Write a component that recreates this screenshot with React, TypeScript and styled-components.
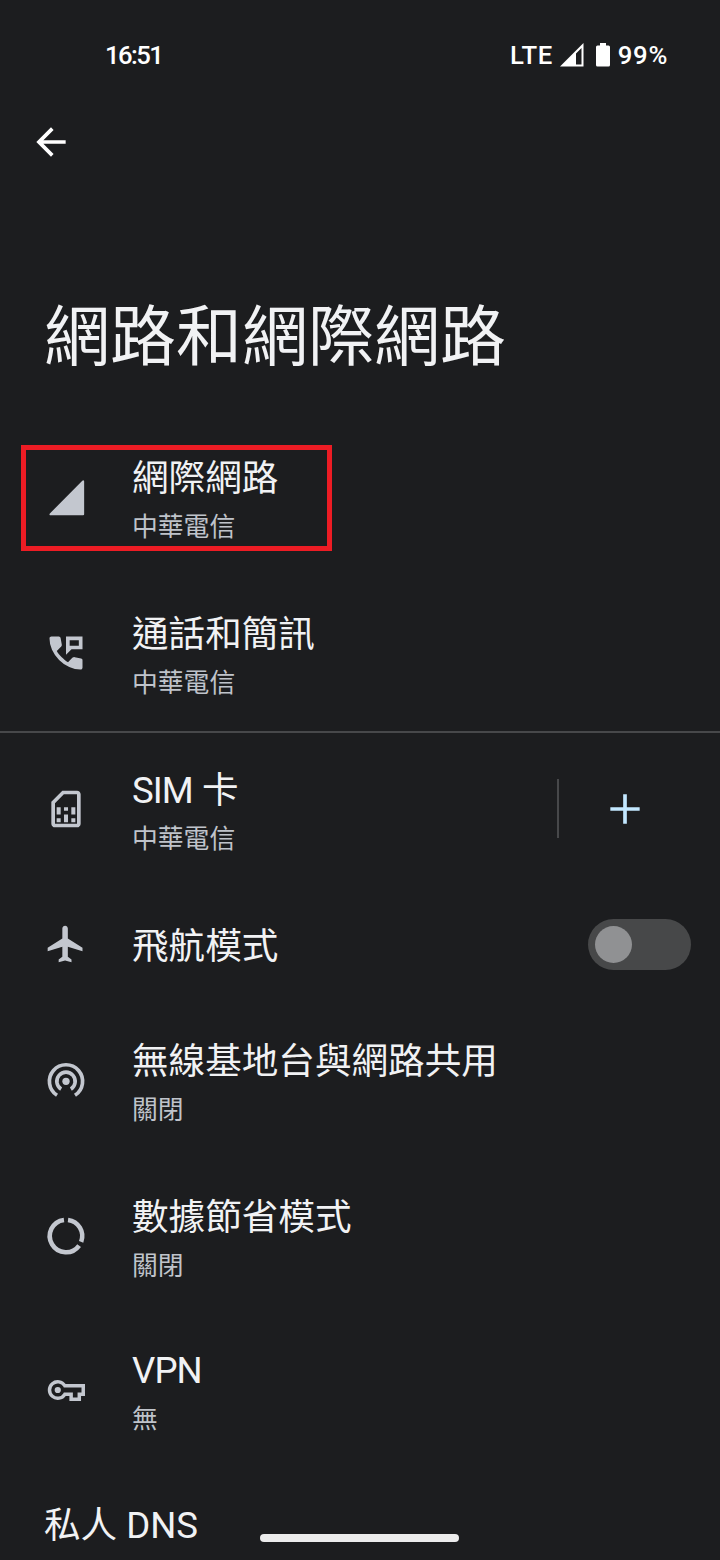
import React from "react";
import styled, { createGlobalStyle } from "styled-components";

const GlobalStyle = createGlobalStyle`
  * { box-sizing: border-box; }
  body {
    margin: 0;
    background: #1c1d1f;
    font-family: Roboto, "Noto Sans CJK TC", sans-serif;
    color: #f1f2f4;
  }
`;

const Screen = styled.div`
  position: relative;
  display: flex;
  flex-direction: column;
  width: 720px;
  height: 1560px;
  overflow: hidden;
  background: #1c1d1f;
`;

const StatusBar = styled.header`
  display: flex;
  flex-shrink: 0;
  align-items: center;
  justify-content: space-between;
  height: 110px;
  padding: 0 52px 0 105px;
  font-size: 25.7px;
  font-weight: 500;
  line-height: 30px;
  color: #fff;
`;

const Clock = styled.span`
  letter-spacing: -1.6px;
`;

const StatusIcons = styled.div`
  display: flex;
  align-items: center;
`;

const Network = styled.span`
  margin-right: 7px;
  letter-spacing: 0.6px;
`;

const BatteryLevel = styled.span`
  margin-left: 8px;
  letter-spacing: 0.7px;
`;

const BatteryGlyph = styled.svg`
  margin-left: 12px;
`;

const Toolbar = styled.nav`
  display: flex;
  flex-shrink: 0;
  align-items: center;
  height: 64px;
  padding-left: 29px;
`;

const BackButton = styled.button`
  display: flex;
  padding: 0;
  border: 0;
  background: none;
  color: #fff;
`;

const Heading = styled.h1`
  flex-shrink: 0;
  margin: 116px 0 0;
  padding-left: 44px;
  height: 130px;
  font-size: 66px;
  font-weight: 400;
  line-height: 96px;
`;

const List = styled.main`
  display: flex;
  flex-direction: column;
`;

const Row = styled.section<{ $height?: number; $divided?: boolean }>`
  display: flex;
  align-items: center;
  flex-shrink: 0;
  height: ${(p) => p.$height ?? 156}px;
  padding: 0 29px 0 44px;
  border-bottom: ${(p) => (p.$divided ? "2px solid #47484a" : "0")};
`;

const IconSlot = styled.div`
  display: flex;
  width: 88px;
  padding-bottom: 1px;
  color: #c3c7cf;
`;

const Labels = styled.div<{ $inset: number }>`
  flex: 1;
  padding-top: ${(p) => p.$inset}px;
`;

const Title = styled.div`
  font-size: 36.6px;
  line-height: 56px;
`;

const Tight = styled.span`
  letter-spacing: -0.9px;
`;

const Summary = styled.div`
  font-size: 25.8px;
  line-height: 40px;
  color: #bfc3ca;
`;

const AddArea = styled.div`
  display: flex;
  align-items: center;
  justify-content: center;
  width: 134px;
  height: 59px;
  margin-bottom: 1px;
  border-left: 2px solid #47484a;
  color: #c2e7ff;
`;

const Toggle = styled.div`
  display: flex;
  align-items: center;
  width: 103px;
  height: 51px;
  padding: 7px;
  border-radius: 26px;
  background: #474849;
`;

const Knob = styled.div`
  width: 37px;
  height: 37px;
  border-radius: 50%;
  background: #909193;
`;

const Highlight = styled.div`
  position: absolute;
  left: 21px;
  top: 445px;
  width: 311px;
  height: 106px;
  border: 5px solid #ed1c24;
`;

const HomeBar = styled.div`
  position: absolute;
  left: 260px;
  top: 1534px;
  width: 199px;
  height: 8px;
  border-radius: 4px;
  background: #ececec;
`;

const Icon = ({ children }: { children: React.ReactNode }) => (
  <svg width="44" height="44" viewBox="0 0 24 24" fill="currentColor">
    {children}
  </svg>
);

const LineIcon = ({ weight, children }: { weight: number; children: React.ReactNode }) => (
  <svg width="44" height="44" viewBox="0 0 24 24" fill="none" stroke="currentColor" strokeWidth={weight}>
    {children}
  </svg>
);

const BackIcon = () => (
  <Icon>
    <path d="M20 11H7.83l5.59-5.59L12 4l-8 8 8 8 1.41-1.41L7.83 13H20v-2z" />
  </Icon>
);

const SignalIcon = () => (
  <Icon>
    <path d="M3.7 21.4q-.6 0-.7-.3-.1-.3.2-.65L20.9 2.6q.35-.35.7-.2.3.1.3.6v17.8q0 .6-.6.6Z" />
  </Icon>
);

const CallMessageIcon = () => (
  <Icon>
    <path d="M19.95 21q-3.125 0-6.175-1.362-3.05-1.363-5.55-3.863-2.5-2.5-3.862-5.55Q3 7.175 3 4.05q0-.45.3-.75t.75-.3H8.1q.35 0 .625.238.275.237.325.562l.65 3.5q.05.4-.025.675-.075.275-.275.475L6.975 10.9q.5.925 1.187 1.787.688.863 1.513 1.663.775.775 1.625 1.438.85.662 1.8 1.212l2.35-2.35q.225-.225.588-.338.362-.112.712-.062l3.45.7q.35.1.575.362.225.263.225.588v4.05q0 .45-.3.75t-.75.3Z" />
    <path fillRule="evenodd" d="M12 3h9v7h-6l-3 3ZM14 5v3h5V5Z" />
  </Icon>
);

const SimIcon = () => (
  <Icon>
    <path
      fillRule="evenodd"
      d="M18 2h-8L4 8v12c0 1.1.9 2 2 2h12c1.100 0 2-.9 2-2V4c0-1.100-.9-2-2-2Zm0 18H6V8.830L10.830 4H18Z"
    />
    <path d="M6.900 17h2.200v2.200H6.900zM14.900 17h2.200v2.200h-2.200zM6.900 11h2.200v4H6.900zM10.900 15h2.200v4.200h-2.200zM10.900 11h2.200v2h-2.200zM14.900 11h2.200v4h-2.200z" />
  </Icon>
);

const PlaneIcon = () => (
  <Icon>
    <path d="M21 16v-2l-8-5V3.500c0-.83-.67-1.500-1.500-1.500S10 2.670 10 3.500V9l-8 5v2l8-2.500V19l-2 1.500V22l3.500-1 3.500 1v-1.500L13 19v-5.500l8 2.500z" />
  </Icon>
);

const HotspotIcon = () => (
  <LineIcon weight={2}>
    <circle cx="12" cy="12.200" r="2" fill="currentColor" stroke="none" />
    <path d="M9.350 16.440A5 5 0 1 1 14.650 16.440" />
    <path d="M7.100 19.800A9.050 9.050 0 1 1 16.900 19.800" />
  </LineIcon>
);

const DataSaverIcon = () => (
  <LineIcon weight={2.5}>
    <path d="M13.100 3.220A8.850 8.850 0 0 1 20.260 15.170" />
    <path d="M19.160 17.200A8.850 8.850 0 1 1 10.900 3.220" />
  </LineIcon>
);

const KeyIcon = () => (
  <LineIcon weight={1.9}>
    <circle cx="7.500" cy="12" r="1.700" fill="currentColor" stroke="none" />
    <path d="M11.340 9.650H21.400V14.350H19.250V17.050H14.800V14.350H11.340A4.500 4.500 0 1 1 11.340 9.650Z" />
  </LineIcon>
);

const PlusIcon = () => (
  <Icon>
    <path d="M20 13h-7v7h-2v-7H4v-2h7V4h2v7h7z" />
  </Icon>
);

const StatusSignal = () => (
  <svg width="24" height="24" viewBox="0 0 24 24" fill="#fff">
    <path fillRule="evenodd" d="M0 23.500L23.500 0v23.500ZM16 10.500v11h5.500V5Z" />
  </svg>
);

const StatusBattery = () => (
  <BatteryGlyph width="14" height="24" viewBox="0 0 14 24" fill="#fff">
    <path d="M4 0h6v2.500h2.500Q14 2.500 14 4v18q0 1.500-1.500 1.500h-11Q0 23.500 0 22V4q0-1.500 1.500-1.500H4z" />
  </BatteryGlyph>
);

type SettingProps = {
  icon: React.ReactNode;
  title: React.ReactNode;
  summary?: string;
  height?: number;
  inset?: number;
  divided?: boolean;
  action?: React.ReactNode;
};

const Setting = ({ icon, title, summary, height, inset = 2, divided, action }: SettingProps) => (
  <Row $height={height} $divided={divided}>
    <IconSlot>{icon}</IconSlot>
    <Labels $inset={inset}>
      <Title>{title}</Title>
      {summary && <Summary>{summary}</Summary>}
    </Labels>
    {action}
  </Row>
);

export default function App() {
  return (
    <Screen lang="zh-Hant">
      <GlobalStyle />
      <StatusBar>
        <Clock>16:51</Clock>
        <StatusIcons>
          <Network>LTE</Network>
          <StatusSignal />
          <StatusBattery />
          <BatteryLevel>99%</BatteryLevel>
        </StatusIcons>
      </StatusBar>
      <Toolbar>
        <BackButton aria-label="返回">
          <BackIcon />
        </BackButton>
      </Toolbar>
      <Heading>網路和網際網路</Heading>
      <List>
        <Setting icon={<SignalIcon />} title="網際網路" summary="中華電信" />
        <Setting icon={<CallMessageIcon />} title="通話和簡訊" summary="中華電信" height={157} divided />
        <Setting
          icon={<SimIcon />}
          title={<><Tight>SIM</Tight> 卡</>}
          summary="中華電信"
          height={152}
          inset={4}
          action={
            <AddArea>
              <PlusIcon />
            </AddArea>
          }
        />
        <Setting
          icon={<PlaneIcon />}
          title="飛航模式"
          height={118}
          inset={5}
          action={
            <Toggle>
              <Knob />
            </Toggle>
          }
        />
        <Setting icon={<HotspotIcon />} title="無線基地台與網路共用" summary="關閉" />
        <Setting icon={<DataSaverIcon />} title="數據節省模式" summary="關閉" height={155} />
        <Setting icon={<KeyIcon />} title={<Tight>VPN</Tight>} summary="無" height={153} inset={0} />
        <Row $height={118}>
          <Title>私人 DNS</Title>
        </Row>
      </List>
      <Highlight />
      <HomeBar />
    </Screen>
  );
}
